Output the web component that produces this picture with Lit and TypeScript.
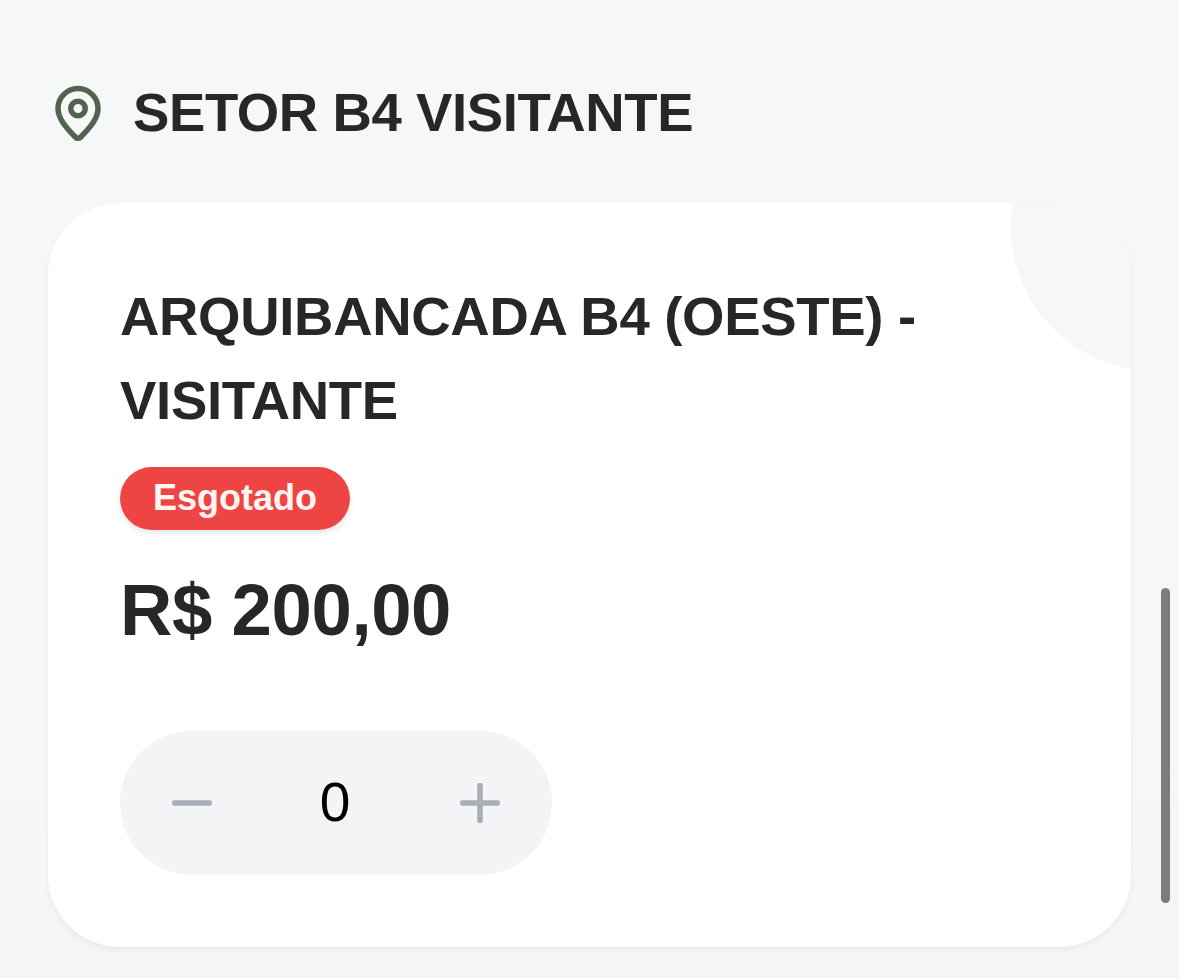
import { LitElement, html, css, svg } from "lit";
import { customElement, state, property } from "lit/decorators.js";

@customElement("quantity-stepper")
class QuantityStepper extends LitElement {
  @property({ type: Number }) value = 0;

  static styles = css`
    :host { display: block; }
    .stepper {
      width: 432px;
      height: 144px;
      display: grid;
      grid-template-columns: 144px 1fr 144px;
      align-items: center;
      border-radius: 72px;
      background: #f2f4f6;
    }
    .btn {
      height: 144px;
      padding: 0;
      border: 0;
      background: none;
      display: flex;
      align-items: center;
      justify-content: center;
      color: #a8aeb6;
    }
    .icon { width: 40px; height: 40px; display: block; }
    .value {
      text-align: center;
      font-size: 55px;
      line-height: 72px;
      color: #000;
      padding: 0 2px 2px 0;
    }
  `;

  render() {
    const bar = svg`<rect x="0" y="17.2" width="40" height="5.6" rx="2" fill="currentColor"></rect>`;
    return html`
      <div class="stepper">
        <button class="btn" aria-label="Diminuir">
          <svg class="icon" viewBox="0 0 40 40">${bar}</svg>
        </button>
        <div class="value">${this.value}</div>
        <button class="btn" aria-label="Aumentar">
          <svg class="icon" viewBox="0 0 40 40">
            ${bar}
            <rect x="17.2" y="0" width="5.6" height="40" rx="2" fill="currentColor"></rect>
          </svg>
        </button>
      </div>
    `;
  }
}

@customElement("app-root")
class AppRoot extends LitElement {
  @state() private quantity = 0;

  static styles = css`
    :host {
      display: block;
      font-family: "Liberation Sans", Arial, sans-serif;
      color: #262729;
    }
    .page {
      position: relative;
      box-sizing: border-box;
      width: 1179px;
      height: 978px;
      padding: 71px 48px 0;
      overflow: hidden;
      background: linear-gradient(#f6f7f9 0, #f6f7f9 75%, #f4f5f7 100%);
    }
    .sector {
      display: flex;
      align-items: center;
      gap: 25px;
      height: 84px;
    }
    .pin { width: 60px; height: 60px; margin-top: 1px; color: #51624f; }
    .sector-name {
      margin: 0;
      font-size: 54.5px;
      line-height: 84px;
      letter-spacing: -0.4px;
      font-weight: 700;
    }
    .shade {
      margin-top: 48px;
      border-radius: 72px;
      box-shadow: 0 3px 6px rgba(0, 0, 0, 0.05);
    }
    .card {
      position: relative;
      box-sizing: border-box;
      height: 744px;
      padding: 72px;
      border-radius: 72px;
      background: #fff;
      overflow: hidden;
    }
    .corner {
      position: absolute;
      top: -120px;
      right: -168px;
      width: 288px;
      height: 288px;
      border-radius: 50%;
      background: #f7f7f7;
    }
    .title {
      margin: 0;
      width: 830px;
      font-size: 54.5px;
      line-height: 84px;
      letter-spacing: -0.3px;
      font-weight: 700;
    }
    .badge {
      box-sizing: border-box;
      display: flex;
      align-items: center;
      justify-content: center;
      width: 230px;
      height: 63px;
      margin-top: 24px;
      padding-bottom: 2px;
      border-radius: 32px;
      background: #ef4444;
      color: #fff6f4;
      font-size: 36px;
      line-height: 60px;
      font-weight: 700;
      box-shadow: 0 3px 6px rgba(0, 0, 0, 0.1);
    }
    .price {
      margin: 30px 0 72px;
      font-size: 72.5px;
      line-height: 99px;
      letter-spacing: -0.4px;
      font-weight: 700;
    }
    .scrollbar {
      position: absolute;
      top: 588px;
      right: 9px;
      width: 9px;
      height: 315px;
      border-radius: 5px;
      background: #7b7c7c;
    }
  `;

  render() {
    return html`
      <main class="page">
        <header class="sector">
          <svg class="pin" viewBox="0 0.2 24 24" fill="none" stroke="currentColor" stroke-width="2.2" stroke-linecap="round" stroke-linejoin="round">
            <path d="M20 10c0 3.9-3 7.4-7 11.5a1.4 1.4 0 0 1-2 0C7 17.4 4 13.9 4 10a8 8 0 0 1 16 0Z"></path>
            <circle cx="12" cy="10" r="2.9"></circle>
          </svg>
          <h2 class="sector-name">SETOR B4 VISITANTE</h2>
        </header>
        <div class="shade">
          <section class="card">
            <div class="corner"></div>
            <h3 class="title">ARQUIBANCADA B4 (OESTE) - VISITANTE</h3>
            <div class="badge">Esgotado</div>
            <p class="price">R$ 200,00</p>
            <quantity-stepper .value=${this.quantity}></quantity-stepper>
          </section>
        </div>
        <div class="scrollbar"></div>
      </main>
    `;
  }
}
